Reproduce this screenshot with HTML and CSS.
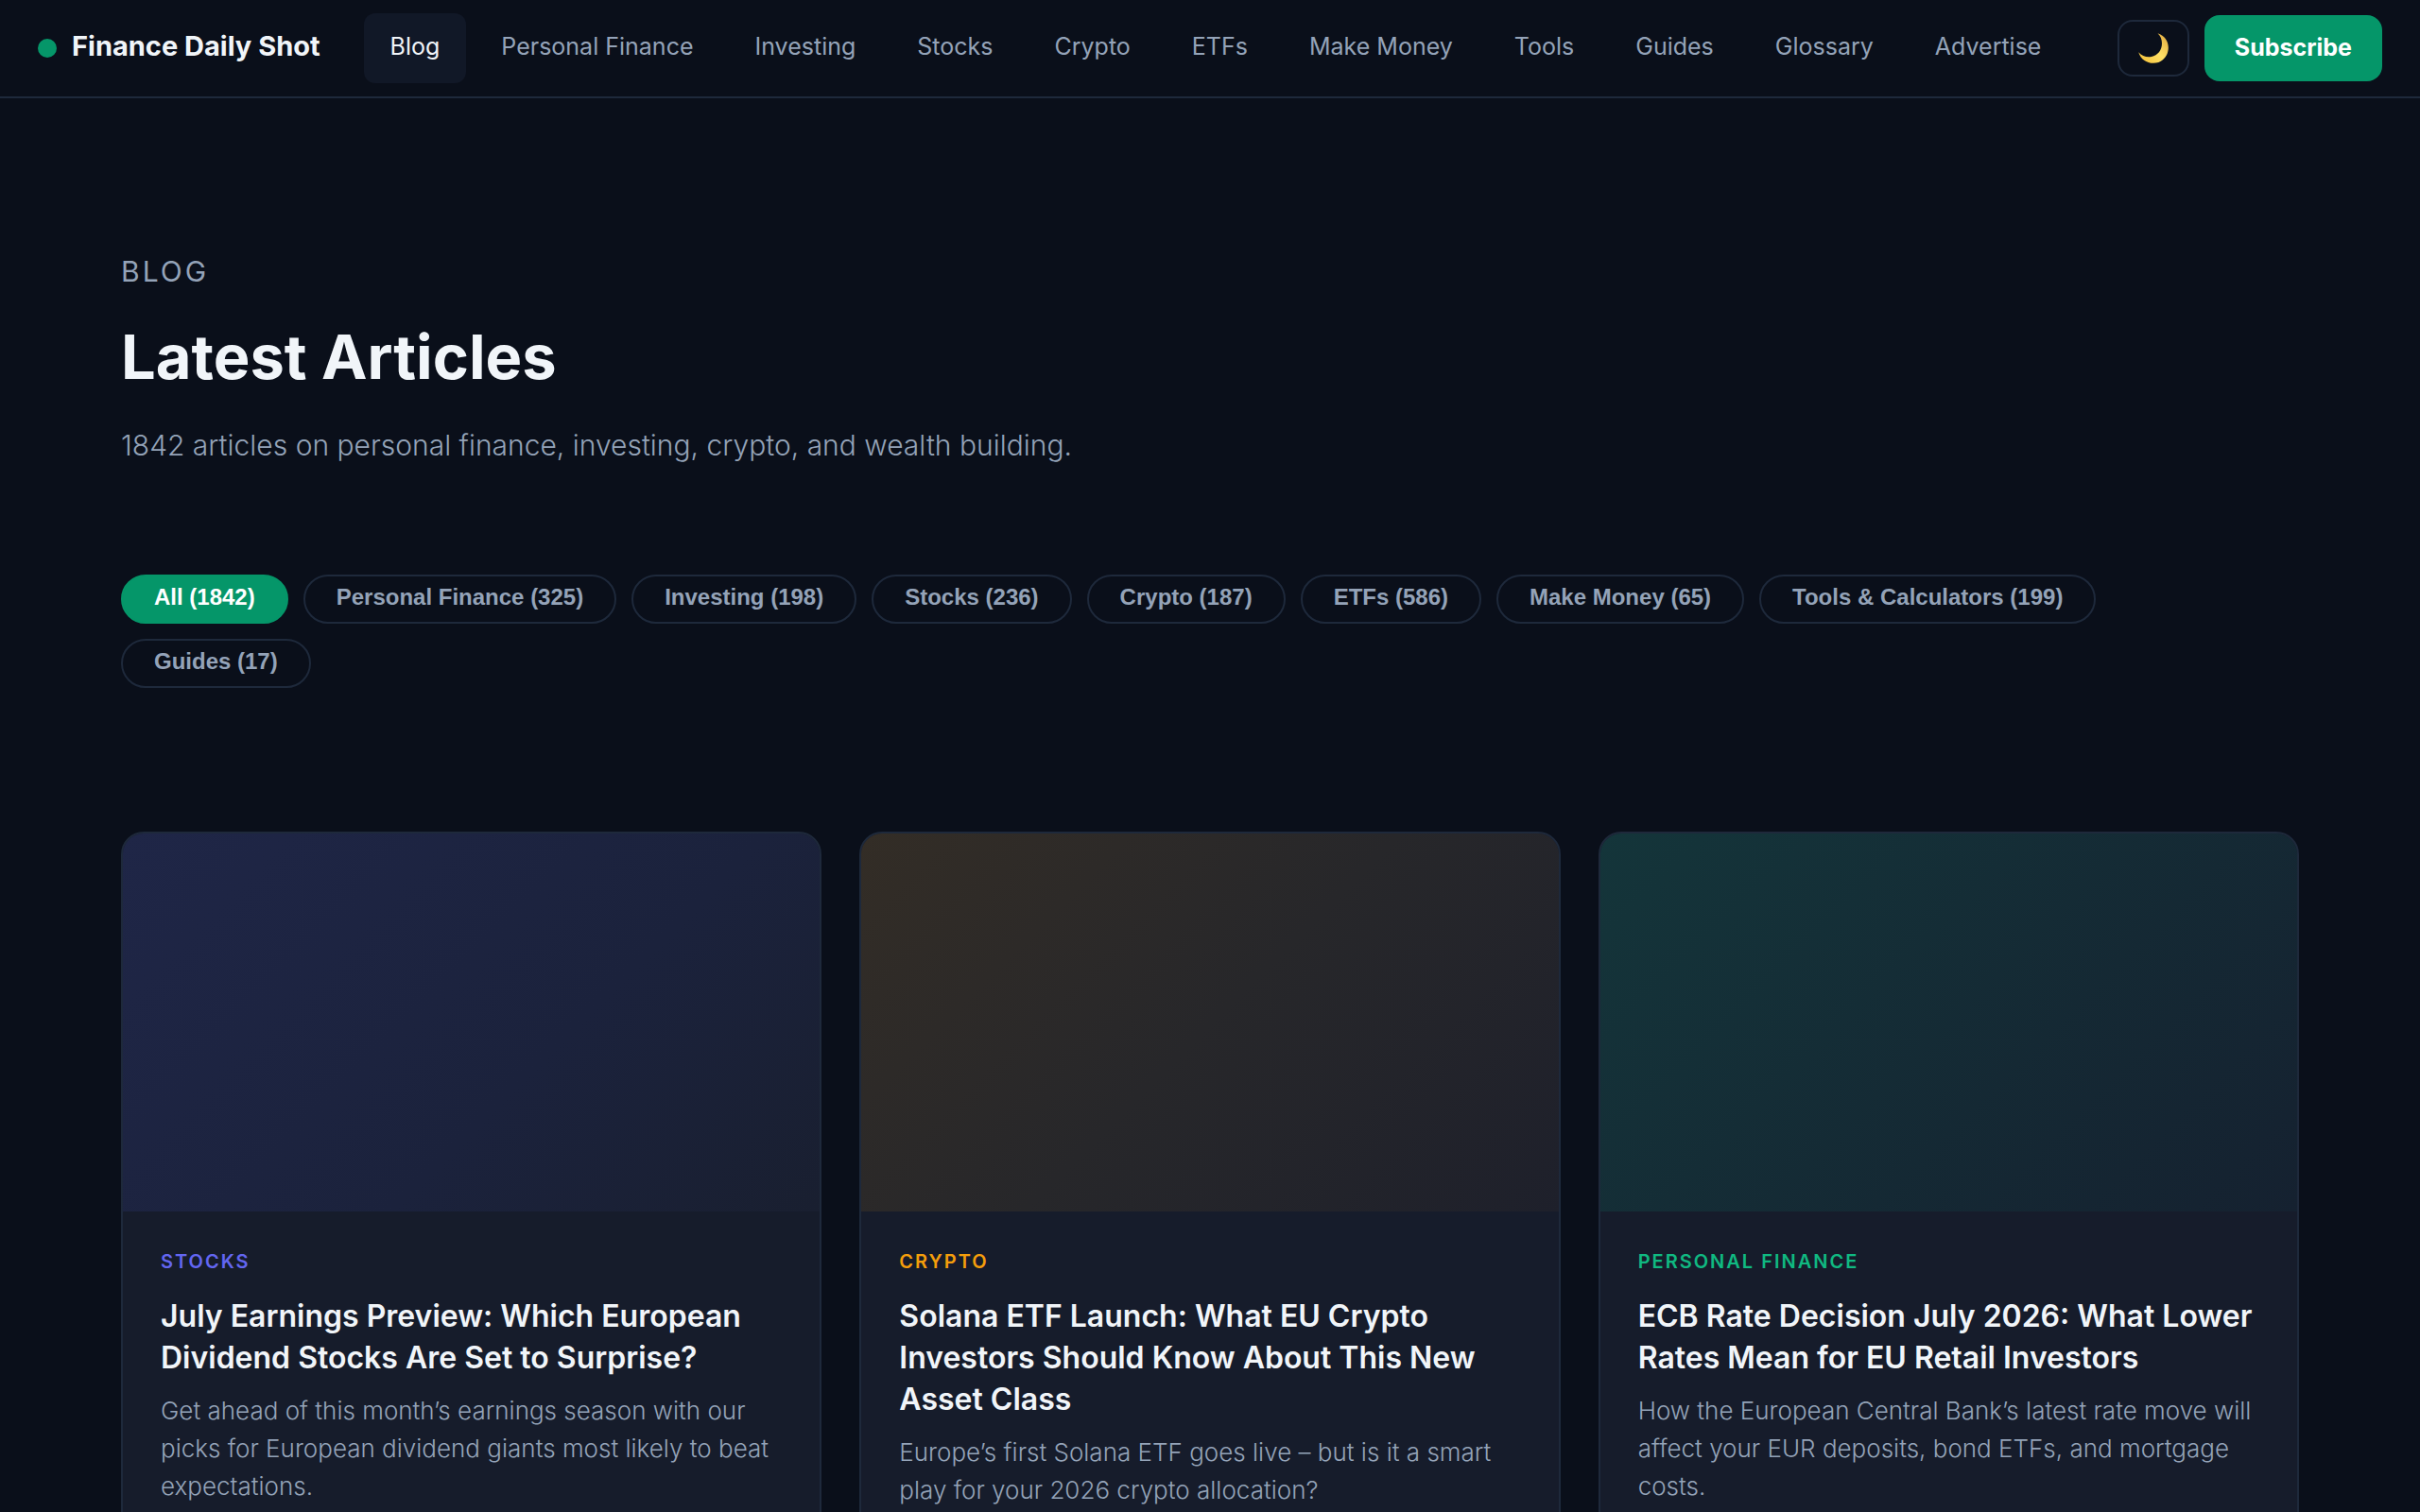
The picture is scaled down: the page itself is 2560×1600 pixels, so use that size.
FILE: index.html
```html
<!DOCTYPE html>
<html lang="en">
<head>
<meta charset="utf-8">
<meta name="viewport" content="width=device-width, initial-scale=1">
<title>Latest Articles – Finance Daily Shot</title>
<link rel="stylesheet" href="styles.css">
</head>
<body>
<header class="site-header">
  <a class="brand" href="#"><span class="brand-dot"></span><span class="brand-name">Finance Daily Shot</span></a>
  <nav class="main-nav" aria-label="Main">
    <a class="nav-link is-active" href="#" aria-current="page">Blog</a>
    <a class="nav-link" href="#">Personal Finance</a>
    <a class="nav-link" href="#">Investing</a>
    <a class="nav-link" href="#">Stocks</a>
    <a class="nav-link" href="#">Crypto</a>
    <a class="nav-link" href="#">ETFs</a>
    <a class="nav-link" href="#">Make Money</a>
    <a class="nav-link" href="#">Tools</a>
    <a class="nav-link" href="#">Guides</a>
    <a class="nav-link" href="#">Glossary</a>
    <a class="nav-link" href="#">Advertise</a>
  </nav>
  <div class="header-actions">
    <button class="theme-toggle" type="button" aria-label="Toggle theme">
      <svg class="moon" viewBox="0 0 32 32" aria-hidden="true">
        <defs>
          <linearGradient id="moon-fill" x1="0" y1="1" x2="1" y2="0">
            <stop offset="0" stop-color="#f3bd33"/>
            <stop offset="0.5" stop-color="#ffe066"/>
            <stop offset="1" stop-color="#dfa53c"/>
          </linearGradient>
        </defs>
        <path fill="url(#moon-fill)" d="M20.500 0.200C27.500 2.500 31.800 8.500 31.800 15.500C31.800 24.500 25 31.800 16 31.800C8.500 31.800 2.500 27.500 0.200 20.200C4 24.500 9 26 14 25C20.500 23.700 25 18 25 11C25 6.800 23.500 3 20.500 0.200Z"/>
      </svg>
    </button>
    <button class="subscribe" type="button">Subscribe</button>
  </div>
</header>

<main class="page">
  <section class="intro">
    <p class="eyebrow">Blog</p>
    <h1 class="page-title">Latest Articles</h1>
    <p class="lead">1842 articles on personal finance, investing, crypto, and wealth building.</p>
  </section>

  <div class="filters" role="group" aria-label="Filter by category">
    <button class="pill is-active" type="button" aria-pressed="true">All (1842)</button>
    <button class="pill" type="button">Personal Finance (325)</button>
    <button class="pill" type="button">Investing (198)</button>
    <button class="pill" type="button">Stocks (236)</button>
    <button class="pill" type="button">Crypto (187)</button>
    <button class="pill" type="button">ETFs (586)</button>
    <button class="pill" type="button">Make Money (65)</button>
    <button class="pill" type="button">Tools &amp; Calculators (199)</button>
    <button class="pill" type="button">Guides (17)</button>
  </div>

  <section class="cards" aria-label="Articles">
    <article class="card stocks">
      <div class="card-image"></div>
      <div class="card-body">
        <p class="tag">Stocks</p>
        <h2 class="card-title">July Earnings Preview: Which European Dividend Stocks Are Set to Surprise?</h2>
        <p class="card-text">Get ahead of this month’s earnings season with our picks for European dividend giants most likely to beat expectations.</p>
      </div>
    </article>
    <article class="card crypto">
      <div class="card-image"></div>
      <div class="card-body">
        <p class="tag">Crypto</p>
        <h2 class="card-title">Solana ETF Launch: What EU Crypto Investors Should Know About This New Asset Class</h2>
        <p class="card-text">Europe’s first Solana ETF goes live – but is it a smart play for your 2026 crypto allocation?</p>
      </div>
    </article>
    <article class="card personal">
      <div class="card-image"></div>
      <div class="card-body">
        <p class="tag">Personal Finance</p>
        <h2 class="card-title">ECB Rate Decision July 2026: What Lower Rates Mean for EU Retail Investors</h2>
        <p class="card-text">How the European Central Bank’s latest rate move will affect your EUR deposits, bond ETFs, and mortgage costs.</p>
      </div>
    </article>
  </section>
</main>
</body>
</html>
```
FILE: styles.css
```css
:root {
  --bg: #0a0f1a;
  --surface: #111827;
  --card: #161c2b;
  --border: #1e293b;
  --text: #f1f5f9;
  --muted: #94a3b8;
  --accent: #059669;
}

* {
  box-sizing: border-box;
}

body {
  margin: 0;
  background: var(--bg);
  color: var(--text);
  font-family: Inter, "Liberation Sans", sans-serif;
}

h1,
h2,
p {
  margin: 0;
}

a {
  color: inherit;
  text-decoration: none;
}

button {
  cursor: pointer;
}

.site-header {
  display: flex;
  align-items: center;
  height: 104px;
  padding: 0 40px;
  border-bottom: 2px solid var(--border);
}

.brand {
  display: flex;
  align-items: center;
  gap: 16px;
  white-space: nowrap;
}

.brand-name {
  padding-bottom: 4px;
  font-size: 29px;
  font-weight: 700;
  line-height: 40px;
}

.brand-dot {
  width: 20px;
  height: 20px;
  border-radius: 50%;
  background: var(--accent);
}

.main-nav {
  display: flex;
  gap: 9px;
  margin-left: 46px;
}

.nav-link {
  padding: 14px 28px 18px;
  border-radius: 12px;
  color: var(--muted);
  font-size: 25px;
  line-height: 42px;
  white-space: nowrap;
}

.nav-link.is-active {
  background: var(--surface);
  color: var(--text);
}

.header-actions {
  display: flex;
  align-items: center;
  gap: 16px;
  margin-left: auto;
}

.theme-toggle {
  display: flex;
  align-items: center;
  justify-content: center;
  width: 76px;
  height: 60px;
  padding: 0;
  border: 2px solid var(--border);
  border-radius: 16px;
  background: transparent;
}

.moon {
  width: 32px;
  height: 32px;
}

.subscribe {
  height: 70px;
  padding: 0 32px 2px;
  border: 0;
  border-radius: 16px;
  background: var(--accent);
  color: #fff;
  font: 700 25px/40px Inter, "Liberation Sans", sans-serif;
}

.page {
  padding: 160px 5% 96px;
}

.eyebrow {
  color: var(--muted);
  font-size: 30px;
  line-height: 46px;
  letter-spacing: 3px;
  text-transform: uppercase;
}

.page-title {
  margin-top: 26px;
  font-size: 65px;
  font-weight: 700;
  line-height: 84px;
}

.lead {
  margin-top: 24px;
  color: var(--muted);
  font-size: 30px;
  font-weight: 300;
  line-height: 54px;
}

.filters {
  display: flex;
  flex-wrap: wrap;
  gap: 16px;
  margin-top: 110px;
  padding-right: 160px;
}

.pill {
  padding: 8px 33px 12px;
  border: 2px solid var(--border);
  border-radius: 26px;
  background: transparent;
  color: var(--muted);
  font: 700 24px/28px "Liberation Sans", Arial, sans-serif;
}

.pill.is-active {
  border-color: var(--accent);
  background: var(--accent);
  color: #fff;
}

.cards {
  display: grid;
  grid-template-columns: repeat(3, 1fr);
  gap: 40px;
  margin-top: 152px;
}

.card {
  overflow: hidden;
  border: 2px solid var(--border);
  border-radius: 24px;
  background: var(--card);
}

.card-image {
  height: 400px;
}

.card-body {
  padding: 40px;
}

.tag {
  font-size: 20px;
  font-weight: 600;
  line-height: 26px;
  letter-spacing: 2px;
  text-transform: uppercase;
}

.card-title {
  margin-top: 23px;
  font-size: 32px;
  font-weight: 600;
  line-height: 44px;
}

.card-text {
  margin-top: 14px;
  color: var(--muted);
  font-size: 26px;
  font-weight: 350;
  line-height: 40px;
}

.stocks .card-image {
  background: linear-gradient(135deg, #1f2647, #1b223c 60%, #191f30);
}

.crypto .card-image {
  background: linear-gradient(135deg, #332d26, #27272a 50%, #1e202b);
}

.personal .card-image {
  background: linear-gradient(135deg, #14353a, #152130);
}

.stocks .tag {
  color: #6366f1;
}

.crypto .tag {
  color: #f59e0b;
}

.personal .tag {
  color: #10b981;
}
```
